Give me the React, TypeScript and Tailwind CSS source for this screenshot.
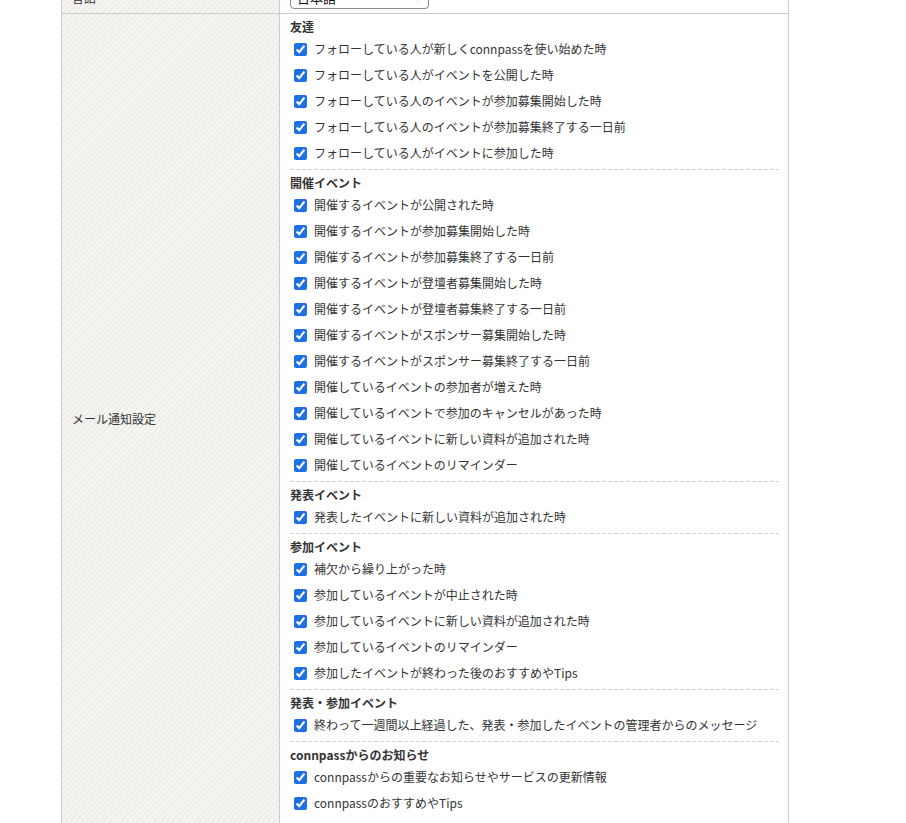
import React from "react";

type Group = { title: string; items: string[] };

const groups: Group[] = [
  {
    title: "友達",
    items: [
      "フォローしている人が新しくconnpassを使い始めた時",
      "フォローしている人がイベントを公開した時",
      "フォローしている人のイベントが参加募集開始した時",
      "フォローしている人のイベントが参加募集終了する一日前",
      "フォローしている人がイベントに参加した時",
    ],
  },
  {
    title: "開催イベント",
    items: [
      "開催するイベントが公開された時",
      "開催するイベントが参加募集開始した時",
      "開催するイベントが参加募集終了する一日前",
      "開催するイベントが登壇者募集開始した時",
      "開催するイベントが登壇者募集終了する一日前",
      "開催するイベントがスポンサー募集開始した時",
      "開催するイベントがスポンサー募集終了する一日前",
      "開催しているイベントの参加者が増えた時",
      "開催しているイベントで参加のキャンセルがあった時",
      "開催しているイベントに新しい資料が追加された時",
      "開催しているイベントのリマインダー",
    ],
  },
  {
    title: "発表イベント",
    items: ["発表したイベントに新しい資料が追加された時"],
  },
  {
    title: "参加イベント",
    items: [
      "補欠から繰り上がった時",
      "参加しているイベントが中止された時",
      "参加しているイベントに新しい資料が追加された時",
      "参加しているイベントのリマインダー",
      "参加したイベントが終わった後のおすすめやTips",
    ],
  },
  {
    title: "発表・参加イベント",
    items: ["終わって一週間以上経過した、発表・参加したイベントの管理者からのメッセージ"],
  },
  {
    title: "connpassからのお知らせ",
    items: ["connpassからの重要なお知らせやサービスの更新情報", "connpassのおすすめやTips"],
  },
];

function Dashed() {
  return (
    <div className="h-px w-full bg-[linear-gradient(to_right,#cfcfcf_4px,transparent_4px)] bg-[length:6px_1px]" />
  );
}

function NotificationGroup({ group, last }: { group: Group; last: boolean }) {
  return (
    <div>
      <div className={last ? "pt-[4px] pb-[7px]" : "pt-[4px] pb-[3px]"}>
        <div className="h-[18px] leading-[18px] font-bold text-[#333]">{group.title}</div>
        {group.items.map((item) => (
          <label key={item} className="flex h-[26px] items-center">
            <input
              type="checkbox"
              defaultChecked
              className="m-0 ml-[4px] h-[13px] w-[13px] accent-[#1f6fe5]"
            />
            <span className="ml-[7px] leading-[18px] text-[#333]">{item}</span>
          </label>
        ))}
      </div>
      {!last && <Dashed />}
    </div>
  );
}

export default function App() {
  return (
    <div
      className="min-h-screen bg-white text-[12px]"
      style={{ fontFamily: '"Noto Sans CJK JP", "Noto Sans", sans-serif' }}
    >
      <div className="ml-[61px] mt-[-18px] w-[728px] border border-[#cccccc]">
        {/* language row */}
        <div className="flex h-[30px]">
          <div className="flex w-[218px] items-center border-r border-[#cccccc] bg-[repeating-linear-gradient(-45deg,#eeede9_0,#eeede9_2px,#f6f5f2_2px,#f6f5f2_4px)] px-[10px] text-[#333]">
            言語
          </div>
          <div className="flex flex-1 items-center px-[10px]">
            <div className="flex h-[22px] w-[139px] items-center justify-between rounded-[4px] border border-[#8a8a8a] bg-white pl-[6px] pr-[6px] text-[13px] text-[#111]">
              <span>日本語</span>
              <svg width="9" height="6" viewBox="0 0 9 6">
                <path d="M1 1l3.5 3.5L8 1" fill="none" stroke="#333" strokeWidth="1.3" />
              </svg>
            </div>
          </div>
        </div>
        {/* mail notification row */}
        <div className="flex border-t border-[#cccccc]">
          <div className="flex w-[218px] items-center border-r border-[#cccccc] bg-[repeating-linear-gradient(-45deg,#eeede9_0,#eeede9_2px,#f6f5f2_2px,#f6f5f2_4px)] px-[10px] text-[#333]">
            メール通知設定
          </div>
          <div className="flex-1 px-[10px]">
            {groups.map((g, i) => (
              <NotificationGroup key={g.title} group={g} last={i === groups.length - 1} />
            ))}
          </div>
        </div>
      </div>
    </div>
  );
}
